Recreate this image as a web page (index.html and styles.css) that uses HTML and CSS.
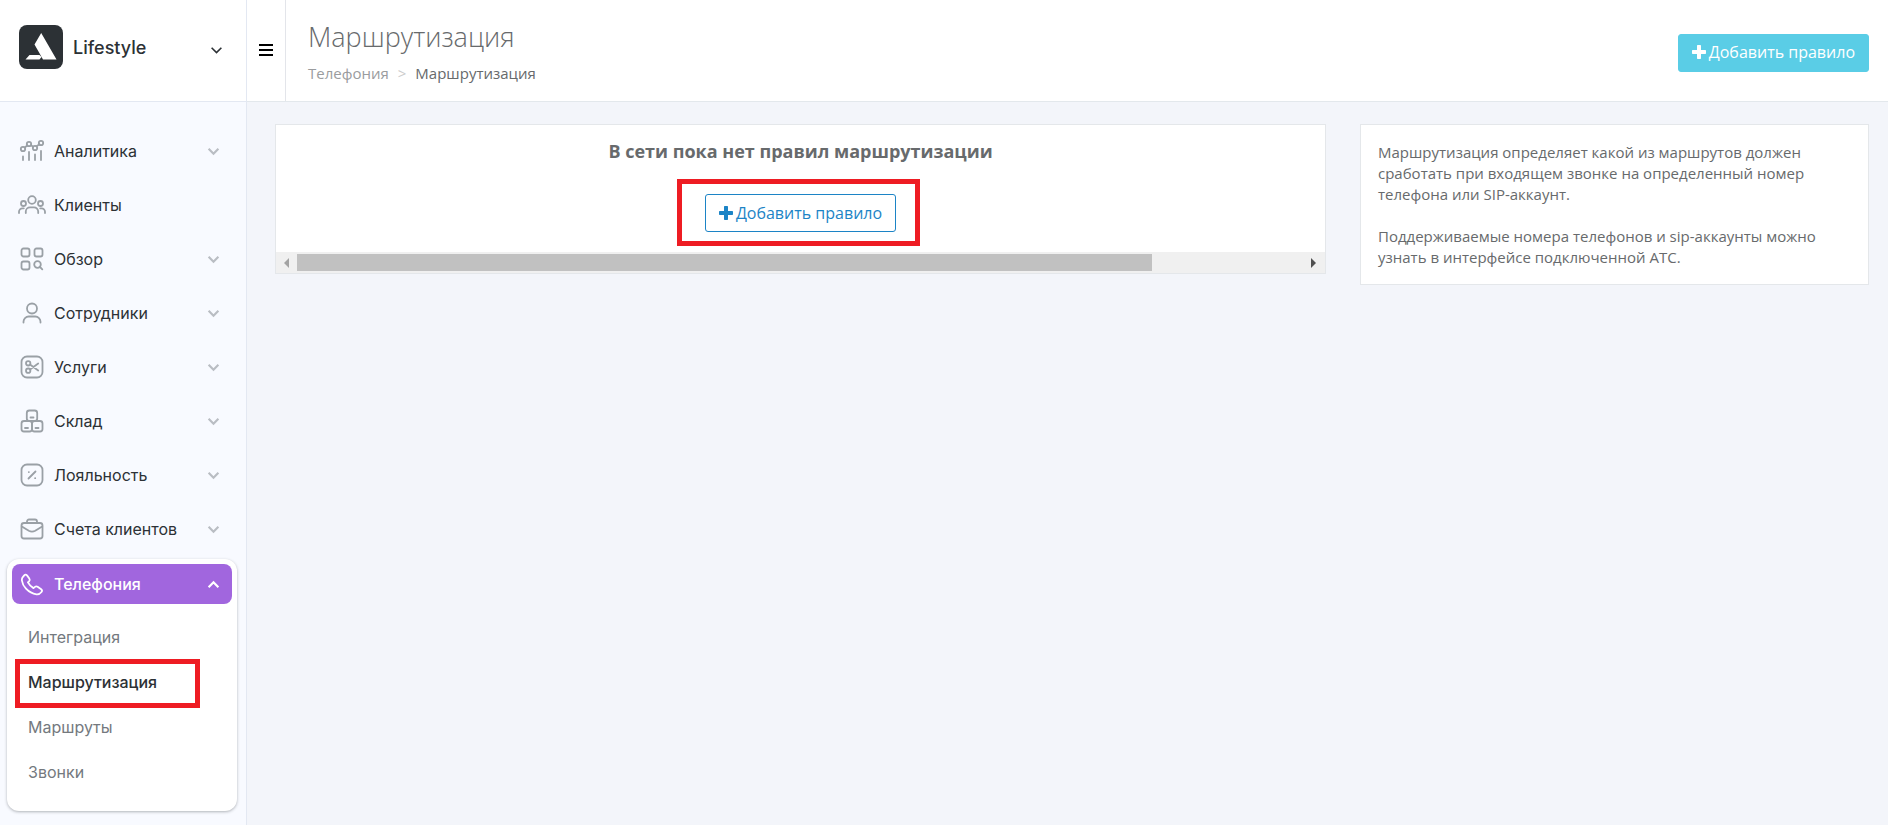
FILE: index.html
```html
<!DOCTYPE html>
<html lang="ru">
<head>
<meta charset="utf-8">
<title>Маршрутизация</title>
<link rel="stylesheet" href="styles.css">
</head>
<body>
<svg class="sprite" aria-hidden="true">
  <symbol id="chevron" viewBox="0 0 12 12"><path d="M1.500 3.500 6 8l4.500-4.500"/></symbol>
  <symbol id="plus" viewBox="0 0 14 14"><path d="M5.700 0h2.600q.7 0 .7.700V5h4.300q.7 0 .7.700v2.600q0 .7-.7.700H9v4.300q0 .7-.7.700H5.700q-.7 0-.7-.7V9H.7Q0 9 0 8.300V5.700Q0 5 .7 5H5V.7Q5 0 5.700 0z"/></symbol>
</svg>
<div class="app">
  <aside class="sidebar">
    <button class="brand" type="button">
      <svg class="brand-logo" viewBox="0 0 44 44" aria-hidden="true"><rect width="44" height="44" rx="8" fill="#2c3135"/><path d="M22.200 8 37.500 34.500H24L21.500 30 15.500 19.500zM10.500 30H20.500L22.500 32 20.500 34.500H6.500z" fill="#fff"/></svg>
      <span class="brand-name">Lifestyle</span>
      <svg class="chevron"><use href="#chevron"/></svg>
    </button>
    <nav class="menu">
      <a class="item" href="#"><svg class="icon" viewBox="0 0 28 28"><circle cx="5" cy="12" r="2.200"/><circle cx="11" cy="7" r="2.200"/><circle cx="17" cy="11" r="2.200"/><circle cx="23" cy="6" r="2.200"/><path d="M6.700 10.500 9.300 8.500M13 8.200l2.200 1.500M18.500 9.300l3-2.100M5 19.500V23M11 15v8M17 17.500V23M23 14v9"/></svg><span>Аналитика</span><svg class="chevron"><use href="#chevron"/></svg></a>
      <a class="item" href="#"><svg class="icon" viewBox="0 0 28 28"><circle cx="14" cy="9" r="3.800"/><circle cx="5.500" cy="12.500" r="2.500"/><circle cx="22.500" cy="12.500" r="2.500"/><path d="M7.800 22v-1.500a4.200 4.200 0 0 1 4.200-4.200h4a4.200 4.200 0 0 1 4.200 4.200V22M1 22v-1.200a3.500 3.500 0 0 1 3.500-3.500h1.300M27 22v-1.200a3.500 3.500 0 0 0-3.500-3.500h-1.300"/></svg><span>Клиенты</span></a>
      <a class="item" href="#"><svg class="icon" viewBox="0 0 28 28"><rect x="3.500" y="3.500" width="8" height="8" rx="2"/><rect x="16.500" y="3.500" width="8" height="8" rx="2"/><rect x="3.500" y="16.500" width="8" height="8" rx="2"/><circle cx="19.500" cy="19.500" r="3.300"/><path d="m22 22 2.300 2.300"/></svg><span>Обзор</span><svg class="chevron"><use href="#chevron"/></svg></a>
      <a class="item" href="#"><svg class="icon" viewBox="0 0 28 28"><circle cx="14" cy="9.500" r="5"/><path d="M5.500 23.500v-.8a5.200 5.200 0 0 1 5.200-5.200h6.600a5.200 5.200 0 0 1 5.200 5.200v.8"/></svg><span>Сотрудники</span><svg class="chevron"><use href="#chevron"/></svg></a>
      <a class="item" href="#"><svg class="icon" viewBox="0 0 28 28"><rect x="3.500" y="3.500" width="21" height="21" rx="5.500"/><circle cx="10.200" cy="10.300" r="2.200"/><circle cx="10.200" cy="17.700" r="2.200"/><path d="m12 11.600 8.200 5.900M12 16.400l8.200-5.900"/></svg><span>Услуги</span><svg class="chevron"><use href="#chevron"/></svg></a>
      <a class="item" href="#"><svg class="icon" viewBox="0 0 28 28"><rect x="8.800" y="3.500" width="10.400" height="10.500" rx="2.500"/><rect x="3.500" y="14" width="10.500" height="10.500" rx="2.500"/><rect x="14" y="14" width="10.500" height="10.500" rx="2.500"/><path d="M12.500 10.500h3M7 21h3M17.500 21h3"/></svg><span>Склад</span><svg class="chevron"><use href="#chevron"/></svg></a>
      <a class="item" href="#"><svg class="icon" viewBox="0 0 28 28"><rect x="3.500" y="3.500" width="21" height="21" rx="5.500"/><path d="m10.500 17.500 7-7M10.800 11.100h.1M17.100 17.200h.1"/></svg><span>Лояльность</span><svg class="chevron"><use href="#chevron"/></svg></a>
      <a class="item" href="#"><svg class="icon" viewBox="0 0 28 28"><rect x="3.500" y="8" width="21" height="15.500" rx="2.500"/><path d="M9 8V6.500a2 2 0 0 1 2-2h6a2 2 0 0 1 2 2V8M3.800 11.500l7 4.300q3.200 1.700 6.400 0l7-4.300"/></svg><span>Счета клиентов</span><svg class="chevron"><use href="#chevron"/></svg></a>
      <div class="group">
        <a class="item item-active" href="#"><svg class="icon" viewBox="0 0 28 28"><path d="M4.300 7.800 6.200 5.400Q7.600 4 9 5.400l2.300 3.100q1 1.400-.1 2.600l-1.300 1.300q1.900 3.600 5.600 5.700l1.500-1.200q1.200-1 2.600-.1l3.600 2.500q1.500 1.200.3 2.700-2 2.600-5 2.300Q12.500 23.500 8 18.700 4.500 15 3.900 10.500 3.700 9 4.300 7.800z"/></svg><span>Телефония</span><svg class="chevron chevron-up"><use href="#chevron"/></svg></a>
        <div class="submenu">
          <a href="#">Интеграция</a>
          <a class="current" href="#" aria-current="page">Маршрутизация</a>
          <a href="#">Маршруты</a>
          <a href="#">Звонки</a>
        </div>
      </div>
    </nav>
  </aside>
  <div class="content">
    <header class="topbar">
      <button class="toggle" type="button" aria-label="Меню"><span></span><span></span><span></span></button>
      <div class="heading">
        <h1>Маршрутизация</h1>
        <div class="crumbs"><a href="#">Телефония</a><span class="sep">&gt;</span><span>Маршрутизация</span></div>
      </div>
      <button class="btn btn-info" type="button"><svg><use href="#plus"/></svg>Добавить правило</button>
    </header>
    <main class="columns">
      <section class="panel">
        <div class="empty">
          <h2>В сети пока нет правил маршрутизации</h2>
          <div class="marked"><button class="btn btn-outline" type="button"><svg><use href="#plus"/></svg>Добавить правило</button></div>
        </div>
        <div class="scrollbar"><svg class="arrow arrow-off" viewBox="0 0 5 10"><path d="M5 0v10L0 5z"/></svg><div class="track"><div class="thumb"></div></div><svg class="arrow" viewBox="0 0 5 10"><path d="M0 0v10l5-5z"/></svg></div>
      </section>
      <section class="panel note">
        <p>Маршрутизация определяет какой из маршрутов должен сработать при входящем звонке на определенный номер телефона или SIP-аккаунт.</p>
        <p>Поддерживаемые номера телефонов и sip-аккаунты можно узнать в интерфейсе подключенной АТС.</p>
      </section>
    </main>
  </div>
</div>
</body>
</html>
```
FILE: styles.css
```css
*, *::before, *::after { box-sizing: border-box; }
body {
  margin: 0;
  background: #f3f5fa;
  color: #676a6c;
  font-family: "Open Sans", sans-serif;
  font-size: 15px;
}
a { color: inherit; text-decoration: none; }
button { font: inherit; border: 0; background: none; cursor: pointer; }
.sprite { position: absolute; width: 0; height: 0; }
.app { display: flex; min-height: 100vh; }

.sidebar {
  flex: none;
  width: 247px;
  border-right: 1px solid #e3e8f2;
  background: #f8faff;
  color: #2c3135;
  font-family: Inter, sans-serif;
  font-size: 16px;
}
.brand {
  display: flex;
  align-items: center;
  gap: 10px;
  width: 100%;
  height: 102px;
  padding: 0 23px 8px 19px;
  border-bottom: 1px solid #e3e8f2;
  background: #fff;
  color: #2c3135;
  font-size: 18px;
  font-weight: 500;
}
.brand-logo { width: 44px; height: 44px; }
.brand-name { padding-top: 2px; }
.chevron {
  width: 13px;
  height: 13px;
  margin-left: auto;
  fill: none;
  stroke: #b9bdc3;
  stroke-width: 2;
}
.brand .chevron { margin-top: 8px; stroke: #2c3135; stroke-width: 1.5; }
.menu {
  display: flex;
  flex-direction: column;
  gap: 14px;
  padding: 29px 9px 13px 7px;
}
.item {
  display: flex;
  align-items: center;
  gap: 8px;
  height: 40px;
  margin: 0 5px;
  padding: 0 12px 0 6px;
  border-radius: 8px;
}
.icon {
  width: 28px;
  height: 28px;
  fill: none;
  stroke: #9aa0a6;
  stroke-width: 1.8;
  stroke-linecap: round;
  stroke-linejoin: round;
}
.group {
  margin-top: -4px;
  padding: 5px 0 16px;
  border-radius: 12px;
  background: #fff;
  box-shadow: 0 1px 3px rgba(44, 49, 53, .35);
}
.item-active { background: #a166de; color: #fff; font-weight: 500; }
.item-active .icon, .item-active .chevron { stroke: #fff; }
.chevron-up { transform: rotate(180deg); }
.submenu { padding: 11px 20px 0 21px; line-height: 45px; color: #74797e; }
.submenu a { display: block; position: relative; }
.submenu .current { color: #2c3135; font-weight: 500; }
.submenu .current::after, .marked::after {
  content: "";
  position: absolute;
  border: 5px solid #ee1c23;
  pointer-events: none;
}
.submenu .current::after { inset: -1px 17px -3px -13px; }

.content { flex: 1; min-width: 0; }
.topbar {
  display: flex;
  align-items: center;
  height: 102px;
  padding-right: 19px;
  border-bottom: 1px solid #e3e8ec;
  background: #fff;
}
.toggle {
  display: flex;
  flex-direction: column;
  align-items: center;
  justify-content: center;
  gap: 3px;
  align-self: stretch;
  width: 39px;
  padding: 0 0 1px;
  border-right: 1px solid #e3e5ea;
}
.toggle span { width: 14px; height: 2px; background: #000; }
.heading { flex: 1; padding-left: 22px; }
h1 { margin: 0; font-size: 27px; font-weight: 300; line-height: 38px; }
.crumbs { display: flex; gap: 9px; margin-top: 6px; line-height: 22px; }
.crumbs a { color: #9a9c9e; }
.sep { color: #ccc; }
.btn {
  display: inline-flex;
  align-items: center;
  justify-content: center;
  gap: 3px;
  height: 38px;
  padding: 0 13px 1px;
  border: 1px solid;
  border-radius: 3px;
  font-size: 16px;
}
.btn svg { width: 14px; height: 14px; fill: currentColor; }
.btn-info { margin-top: 4px; border-color: #5acde6; background: #5acde6; color: #fff; }
.btn-outline { border-color: #1c84c6; background: #fff; color: #1c84c6; }

.columns {
  display: grid;
  grid-template-columns: 1051fr 509fr;
  align-items: start;
  gap: 34px;
  padding: 22px 19px 22px 28px;
}
.panel { border: 1px solid #e4e7ea; background: #fff; }
.empty { padding: 14px 14px 20px; text-align: center; }
h2 { margin: 0 0 30px; font-size: 18px; font-weight: 700; line-height: 25px; }
.marked { display: flex; justify-content: center; position: relative; }
.marked::after { inset: -15px auto -14px 50%; width: 243px; margin-left: -124px; }
.scrollbar {
  display: flex;
  align-items: center;
  gap: 8px;
  height: 21px;
  padding: 0 9px 0 8px;
  background: #f0f0f0;
}
.track { flex: 1; }
.thumb { width: 85%; height: 17px; background: #c1c1c1; }
.arrow { width: 5px; height: 10px; fill: #505050; }
.arrow-off { fill: #a3a3a3; }
.note { padding: 17px 40px 16px 17px; line-height: 21px; }
.note p { margin: 0; }
.note p + p { margin-top: 21px; }
```
